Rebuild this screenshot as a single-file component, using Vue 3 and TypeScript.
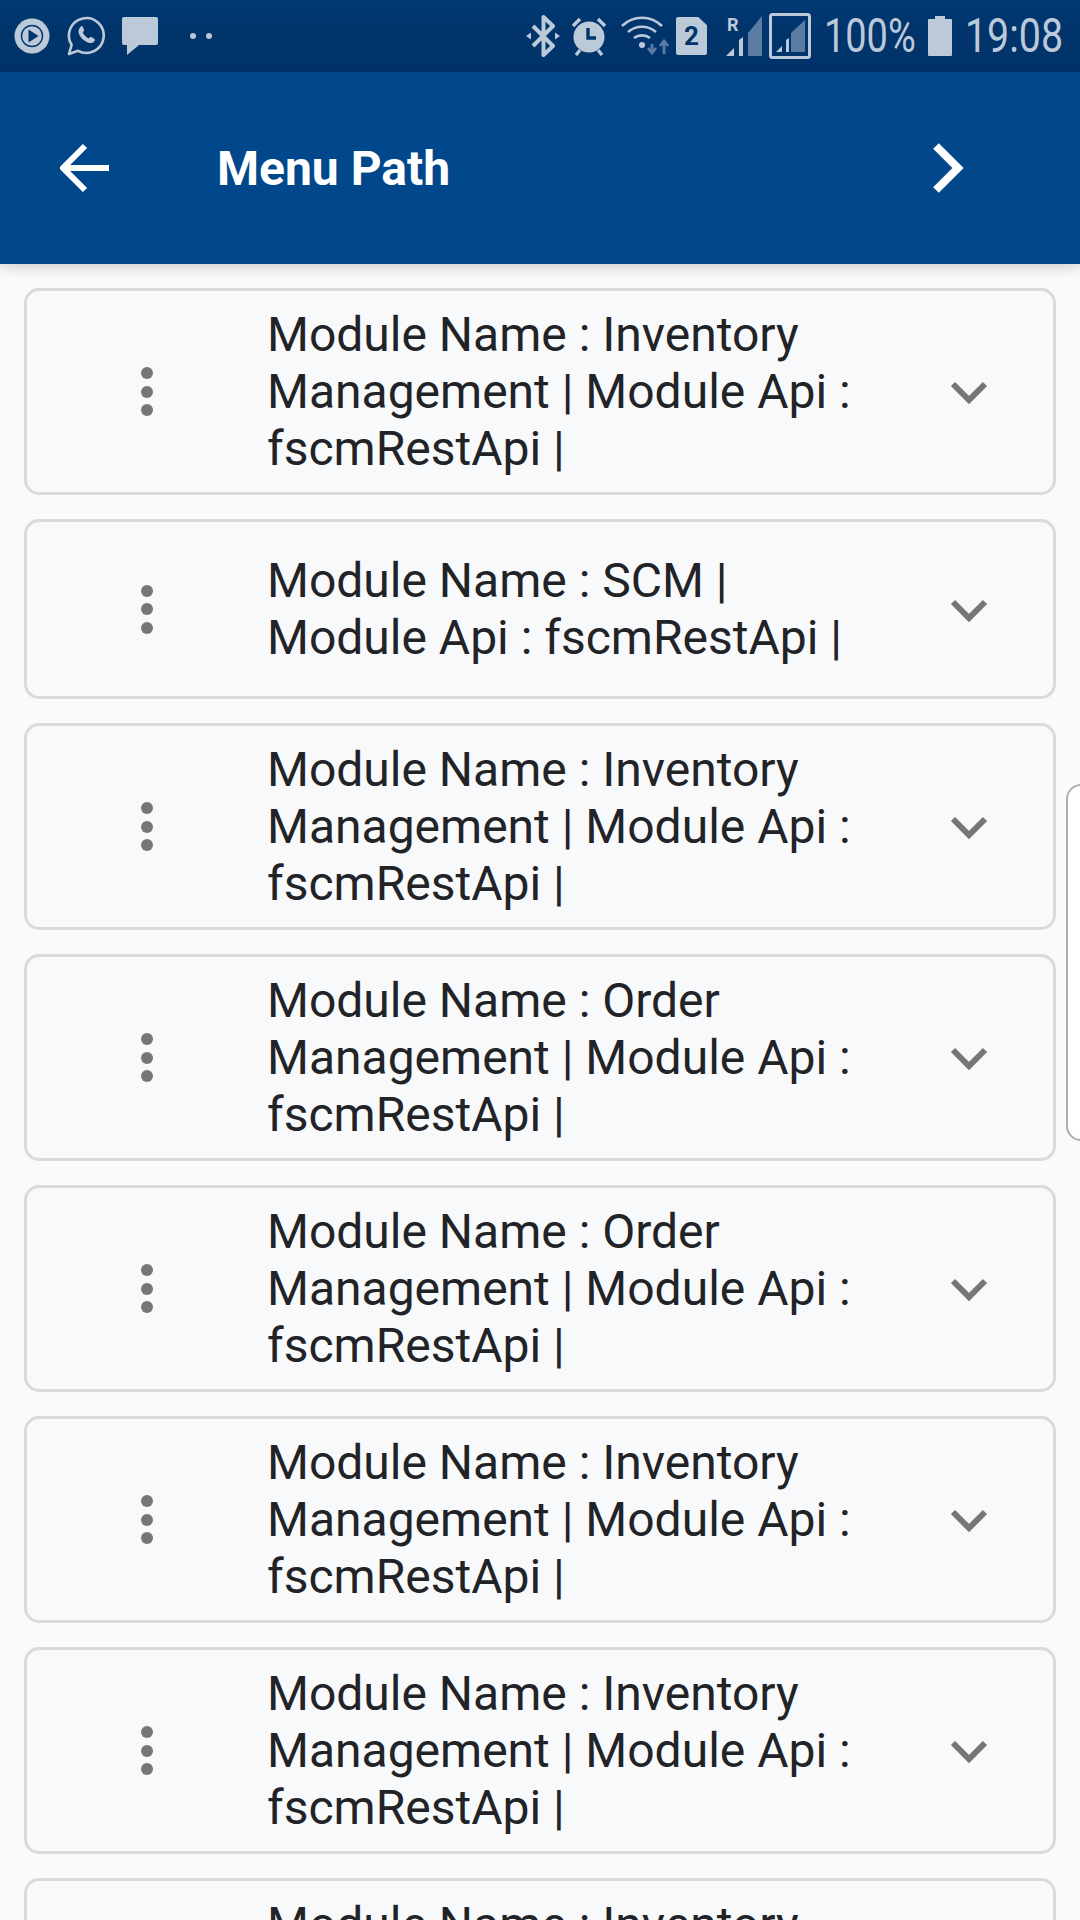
<script setup lang="ts">
const items: string[] = [
  'Inventory Management',
  'SCM',
  'Inventory Management',
  'Order Management',
  'Order Management',
  'Inventory Management',
  'Inventory Management',
  'Inventory Management',
]
</script>

<template>
  <div class="page">
    <div class="status-bar">
      <div class="status-left">
        <svg class="ic-play" viewBox="0 0 36 36">
          <circle cx="18" cy="18" r="17.5" fill="#bcc9d9" />
          <circle cx="18" cy="18" r="10.5" fill="none" stroke="#00346b" stroke-width="1.4" />
          <path d="M14.5 11.5 24.5 18l-10 6.5z" fill="#00346b" />
        </svg>
        <svg class="ic-whatsapp" viewBox="0 0 38 40">
          <path d="M2 38l2.6-9.2A17.4 17.4 0 1 1 11 34.8z" fill="none" stroke="#bcc9d9" stroke-width="2.6" stroke-linejoin="round" />
          <path d="M13.2 10.5c1.2-.8 2.2-.5 2.7.6l1.1 2.6c.3.7 0 1.3-1.300 2.600 1 2.600 3.300 4.900 6 6.100 1.300-1.400 1.900-1.700 2.700-1.300l2.500 1.300c1 .5 1.200 1.400.6 2.500-1.200 2-3.600 2.600-6 1.800-4.800-1.500-8.400-5.100-9.800-9.600-.7-2.500 0-5 2.800-6.600z" fill="#bcc9d9" />
        </svg>
        <svg class="ic-msg" viewBox="0 0 36 40">
          <path d="M2 1h32a2 2 0 0 1 2 2v24a2 2 0 0 1-2 2H17L5 39V29H2a2 2 0 0 1-2-2V3a2 2 0 0 1 2-2z" fill="#bcc9d9" />
        </svg>
        <span class="dots"><i></i><i></i></span>
      </div>
      <div class="status-right">
        <svg class="ic-bt" viewBox="0 0 34 42">
          <path d="M7 11l20 20-9.500 9V2l9.500 9-20 20" fill="none" stroke="#bcc9d9" stroke-width="4" stroke-linejoin="round" />
          <path d="M0 21l5-3.500v7zM34 21l-5-3.500v7z" fill="#bcc9d9" />
        </svg>
        <svg class="ic-alarm" viewBox="0 0 36 40">
          <circle cx="18" cy="21" r="15.500" fill="#bcc9d9" />
          <path d="M2 10l7-7M34 10l-7-7M5 39l4-5M31 39l-4-5" stroke="#bcc9d9" stroke-width="3.400" fill="none" />
          <path d="M17 12v10h8" stroke="#00346b" stroke-width="3.400" fill="none" />
        </svg>
        <svg class="ic-wifi" viewBox="0 0 48 40">
          <path d="M1 10c11-11 29-11 40 0M7 16c8-7 20-7 28 0M13 22c4.500-3.500 11.500-3.500 16 0" fill="none" stroke="#bcc9d9" stroke-width="2.600" />
          <circle cx="21" cy="29" r="3" fill="#bcc9d9" />
          <path d="M31 28v7M27 32l4 5 4-5" fill="none" stroke="#5c7da3" stroke-width="2.800" />
          <path d="M43 38v-12M39 30l4-5 4 5" fill="none" stroke="#5c7da3" stroke-width="2.800" />
        </svg>
        <span class="sim">2</span>
        <span class="signal">
          <span class="roam">R</span>
          <svg class="ic-sig" viewBox="0 0 36 40">
            <path d="M22 40V17L36 0v40z" fill="#5c7da3" />
            <path d="M0 40l8-8v8zM13 40V24l4-3v19z" fill="#bcc9d9" />
          </svg>
        </span>
        <svg class="ic-box" viewBox="0 0 42 46">
          <rect x="1.500" y="1.500" width="39" height="43" rx="2" fill="none" stroke="#bcc9d9" stroke-width="3" />
          <path d="M22 39V20L36 7v32z" fill="#5c7da3" />
          <path d="M7 39l6-6v6zM17 39V27l3-2v14z" fill="#bcc9d9" />
        </svg>
        <span class="stat-text pct">100%</span>
        <svg class="ic-batt" viewBox="0 0 24 40">
          <path d="M1 3h6V0h10v3h6a1 1 0 0 1 1 1v35a1 1 0 0 1-1 1H1a1 1 0 0 1-1-1V4a1 1 0 0 1 1-1z" fill="#bcc9d9" />
        </svg>
        <span class="stat-text time">19:08</span>
      </div>
    </div>

    <header class="toolbar">
      <button class="back" aria-label="Back">
        <svg viewBox="0 0 50 50" width="50" height="50">
          <path d="M2 25h47M25 3 3 25l22 22" fill="none" stroke="#fff" stroke-width="6" />
        </svg>
      </button>
      <h1 class="title">Menu Path</h1>
      <button class="next" aria-label="Next">
        <svg viewBox="0 0 32 50" width="32" height="50">
          <path d="M4 3l22 22L4 47" fill="none" stroke="#fff" stroke-width="8" />
        </svg>
      </button>
    </header>

    <main class="list">
      <div v-for="(name, i) in items" :key="i" class="card">
        <div class="more"><i></i><i></i><i></i></div>
        <p class="label">Module Name : {{ name }} | Module Api : fscmRestApi |</p>
        <svg class="chevron" viewBox="0 0 38 26" width="38" height="26">
          <path d="M3 4l16 16L35 4" fill="none" stroke="#767676" stroke-width="6" />
        </svg>
      </div>
    </main>

    <div class="edge-handle"></div>
  </div>
</template>

<style>
html,
body {
  margin: 0;
  background: #fafafa;
}
</style>

<style scoped>
.page {
  position: relative;
  width: 1080px;
  height: 1920px;
  overflow: hidden;
  background: #fafafa;
  font-family: Roboto, "Liberation Sans", sans-serif;
}

.status-bar {
  height: 72px;
  display: flex;
  align-items: center;
  justify-content: space-between;
  padding: 0 18px 0 14px;
  box-sizing: border-box;
  background: linear-gradient(#003a75, #00346b 40%, #00346b);
}
.status-left,
.status-right {
  display: flex;
  align-items: center;
}
.status-bar svg {
  display: block;
  flex: none;
}
.ic-play { width: 36px; height: 36px; }
.ic-whatsapp { width: 38px; height: 40px; margin-left: 17px; }
.ic-msg { width: 36px; height: 40px; margin-left: 17px; }
.dots {
  display: flex;
  gap: 10px;
  margin-left: 32px;
}
.dots i {
  width: 6px;
  height: 6px;
  border-radius: 50%;
  background: #bcc9d9;
}
.ic-bt { width: 34px; height: 42px; }
.ic-alarm { width: 36px; height: 40px; margin-left: 11px; }
.ic-wifi { width: 48px; height: 40px; margin-left: 14px; }
.sim {
  width: 31px;
  height: 38px;
  margin-left: 7px;
  background: #bcc9d9;
  color: #00346b;
  font-size: 26px;
  font-weight: 700;
  line-height: 39px;
  text-align: center;
  border-radius: 2px;
  clip-path: polygon(0 0, 72% 0, 100% 22%, 100% 100%, 0 100%);
}
.signal {
  position: relative;
  display: block;
  margin-left: 19px;
}
.ic-sig { width: 36px; height: 40px; }
.roam {
  position: absolute;
  left: 1px;
  top: 0;
  color: #bcc9d9;
  font-size: 18px;
  font-weight: 700;
  line-height: 18px;
}
.ic-box { width: 42px; height: 46px; margin-left: 7px; }
.stat-text {
  display: inline-block;
  color: #bcc9d9;
  font-size: 48px;
  line-height: 50px;
  font-family: Roboto, sans-serif;
  transform-origin: left center;
}
.pct {
  width: 91px;
  margin-left: 13px;
  transform: scaleX(0.79);
}
.ic-batt { width: 24px; height: 40px; margin-left: 13px; }
.time {
  width: 97px;
  margin-left: 13px;
  transform: scaleX(0.82);
}

.toolbar {
  position: relative;
  z-index: 1;
  height: 192px;
  display: flex;
  align-items: center;
  background: #00478c;
  box-shadow: 0 2px 14px rgba(0, 0, 0, 0.2);
}
.back,
.next {
  border: 0;
  padding: 0;
  background: transparent;
}
.back {
  width: 217px;
  height: 100%;
  padding-left: 60px;
  box-sizing: border-box;
  text-align: left;
}
.back svg,
.next svg {
  display: block;
}
.title {
  flex: 1;
  margin: 0;
  color: #fff;
  font-size: 48px;
  font-weight: 700;
}
.next {
  width: 265px;
  height: 100%;
  display: flex;
  align-items: center;
  justify-content: center;
  box-sizing: border-box;
  border-left: 1px solid #004282;
  border-radius: 14px;
}

.list {
  display: flex;
  flex-direction: column;
  gap: 24px;
  padding: 24px 24px 0;
}
.card {
  flex: none;
  display: flex;
  align-items: center;
  min-height: 180px;
  padding: 15px 0;
  box-sizing: border-box;
  background: #f8f9fb;
  border: 3px solid #d9dadc;
  border-radius: 15px;
}
.more {
  flex: none;
  width: 240px;
  display: flex;
  flex-direction: column;
  align-items: center;
  gap: 6.500px;
  box-sizing: border-box;
}
.more i {
  width: 12px;
  height: 12px;
  border-radius: 50%;
  background: #767676;
}
.label {
  flex: none;
  width: 600px;
  margin: 0;
  color: #212326;
  font-size: 48px;
  line-height: 57px;
}
.chevron {
  flex: none;
  margin: 3px 0 0 83px;
}

.edge-handle {
  position: absolute;
  left: 1066px;
  top: 784px;
  width: 30px;
  height: 357px;
  box-sizing: border-box;
  background: #fff;
  border: 2px solid #aeaeae;
  border-radius: 16px;
}
</style>
